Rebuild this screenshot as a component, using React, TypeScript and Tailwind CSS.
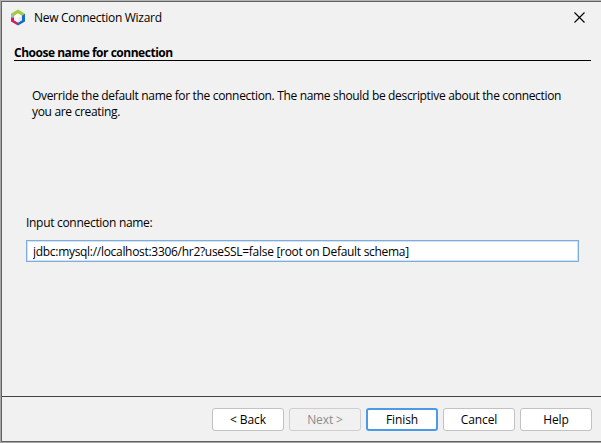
import type { ReactNode } from "react";

function Logo() {
  return (
    <svg className="h-[17px] w-[16px]" viewBox="0 0 16 17">
      <path d="M1 4.8 8 .6l7 4.2-3.2 1.9L8 4.5 4.2 6.7z" fill="#a4cd39" />
      <path d="M1 4.8 4.2 6.7v4.6L8 13.4v3.2L1 12.5z" fill="#d81b60" />
      <path d="M15 4.8 11.8 6.7v4.6L8 13.4v3.2l7-4.1z" fill="#1b6ac6" />
      <path d="M1 4.8 4.2 6.7v2.1L1 8.4z" fill="#8cc7cf" />
      <path d="M4.2 6.7 8 4.5l3.8 2.2L8 8.8z" fill="#fff" />
      <path d="M4.2 6.7 8 8.8v4.6l-3.8-2.1z" fill="#fafafa" />
      <path d="M11.8 6.7 8 8.8v4.6l3.8-2.1z" fill="#e9edf0" />
    </svg>
  );
}

const buttonBase = "flex h-[23px] w-[72px] items-start justify-center rounded-[3px] leading-4 tracking-[-0.1px]";

function Button({ children, look }: { children: ReactNode; look: string }) {
  return (
    <button className={`${buttonBase} ${look}`}>
      <span className="whitespace-pre">{children}</span>
    </button>
  );
}

const plain = "border border-[#c2c2c2] bg-white pt-[3px] text-black";

export default function App() {
  return (
    <div className="flex h-[443px] w-[601px] flex-col overflow-hidden border-t border-b border-l border-t-[#b4b4b4] border-b-[#a5a5a5] border-l-[#a8a8a8] font-['Open_Sans','Noto_Sans',sans-serif] text-[12px] leading-4 text-black">
      <div className="flex min-h-0 flex-1 flex-col border-t border-b border-l border-[#626262] bg-[#f1f1f1]">
        <header className="flex h-[43px] shrink-0 items-start pt-[7px] pl-2">
          <Logo />
          <h1 className="mt-px ml-2 whitespace-nowrap tracking-[-0.29px]">New Connection Wizard</h1>
          <button aria-label="Close" className="mt-[3px] mr-[16px] ml-auto">
            <svg className="block h-[11px] w-[11px]" viewBox="0 0 11 11" fill="none" stroke="#000" strokeWidth="1.1">
              <path d="M.5.5l10 10M10.5.5l-10 10" />
            </svg>
          </button>
        </header>
        <main className="flex flex-1 flex-col">
          <h2 className="mr-[10px] ml-3 h-[16px] border-b border-black font-bold whitespace-nowrap tracking-[-0.48px]">
            Choose name for connection
          </h2>
          <p className="mt-[27px] ml-[30px] whitespace-nowrap tracking-[-0.328px]">
            Override the default name for the connection. The name should be descriptive about the connection
            <br />
            you are creating.
          </p>
          <label className="mt-[95px] ml-6 h-[25px] tracking-[-0.3px]">Input connection name:</label>
          <input
            className="ml-6 h-[22px] w-[553px] border border-[#7eaddb] bg-white pt-[1px] pl-[6px] tracking-[-0.297px] shadow-[inset_0_0_0_1px_#d0e2f3] outline-none"
            defaultValue="jdbc:mysql://localhost:3306/hr2?useSSL=false [root on Default schema]"
          />
        </main>
        <footer className="flex h-[45px] shrink-0 justify-end gap-[5px] border-t border-[#434343] pt-[11px] pr-[9px]">
          <Button look={plain}>{"< Back"}</Button>
          <Button look="border border-[#cfcfcf] bg-[#f1f1f1] pt-[3px] text-[#8c8c8c]">{"Next >"}</Button>
          <Button look="border-2 border-[#4a9ae8] bg-white pt-[2px]">Finish</Button>
          <Button look={plain}>Cancel</Button>
          <Button look={plain}>Help</Button>
        </footer>
      </div>
    </div>
  );
}
